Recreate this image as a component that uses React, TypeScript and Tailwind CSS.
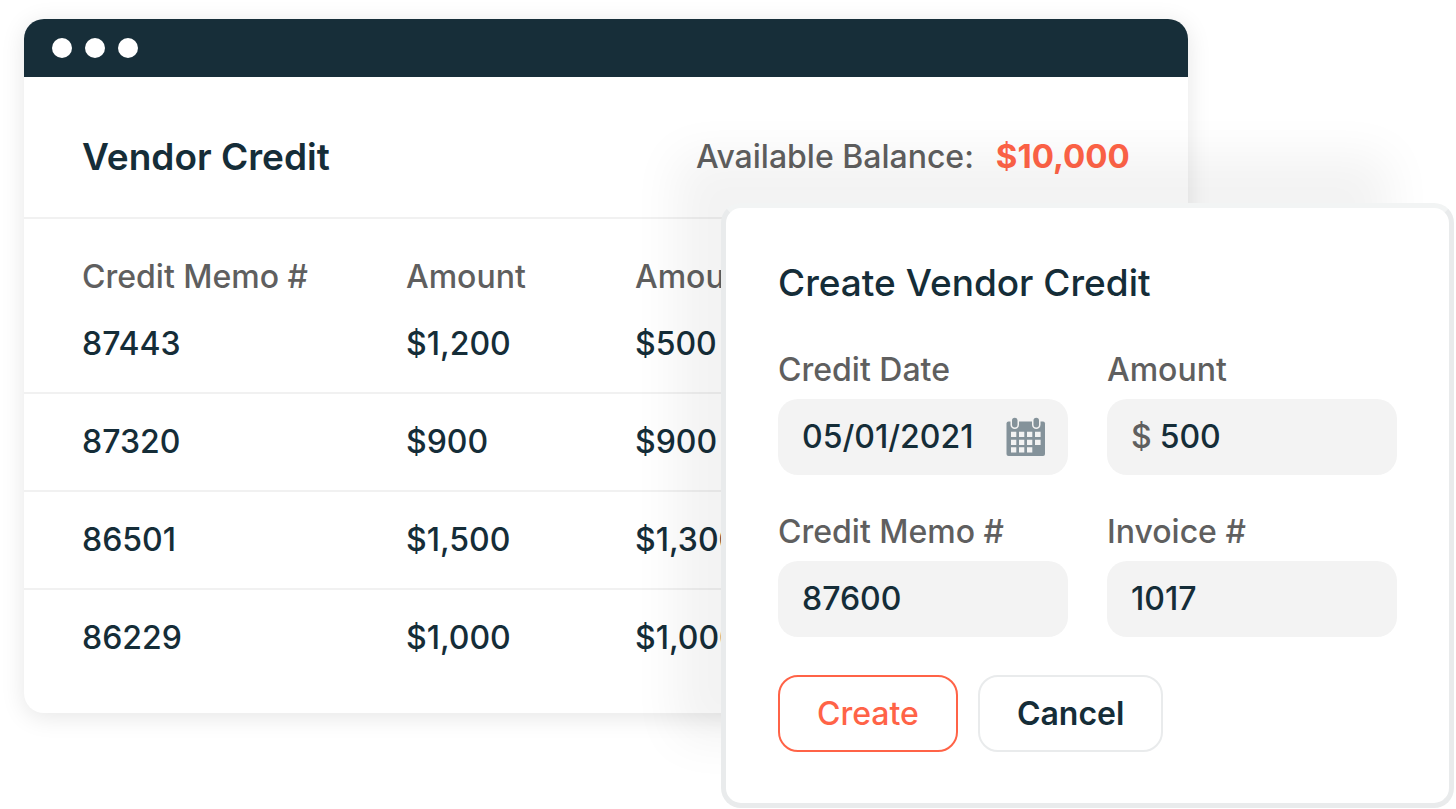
import type { ReactNode } from "react"

const credits = [
  { memo: "87443", amount: "$1,200", left: "$500" },
  { memo: "87320", amount: "$900", left: "$900" },
  { memo: "86501", amount: "$1,500", left: "$1,300" },
  { memo: "86229", amount: "$1,000", left: "$1,000" },
]

const CalendarIcon = () => (
  <svg viewBox="0 0 40 40" className="size-10" aria-hidden="true">
    <rect x="0.500" y="4.500" width="38.500" height="34.500" rx="2" fill="#84929a" />
    {/* rings, outlined in the field colour */}
    <rect x="4.500" y="-1" width="8.500" height="13" rx="4.250" fill="#f3f3f3" />
    <rect x="26" y="-1" width="8.500" height="13" rx="4.250" fill="#f3f3f3" />
    <rect x="6" y="0.700" width="5.500" height="9.700" rx="2.750" fill="#84929a" />
    <rect x="27.500" y="0.700" width="5.500" height="9.700" rx="2.750" fill="#84929a" />
    {/* days */}
    <path
      fill="#f3f3f3"
      d="M5 14.700h5.300v5.300H5zM13 14.700h5.300v5.300H13zM21 14.700h5.300v5.300H21zM29 14.700h5.600v5.300H29zM5 22.700h5.300v5.300H5zM13 22.700h5.300v5.300H13zM21 22.700h5.300v5.300H21zM29 22.700h5.600v5.300H29zM5 30.200h5.300v5.300H5zM13 30.200h5.300v5.300H13zM21 30.200h5.300v5.300H21z"
    />
  </svg>
)

type FieldProps = {
  id: string
  label: string
  value: string
  prefix?: string
  children?: ReactNode
}

const Field = ({ id, label, value, prefix, children }: FieldProps) => (
  <div>
    <label htmlFor={id} className="block leading-10 text-[#5f5f5f]">
      {label}
    </label>
    <div className="mt-[9px] flex h-[76px] items-center gap-2 rounded-[20px] bg-[#f3f3f3] px-6">
      {prefix && <span className="text-[#5f5f5f]">{prefix}</span>}
      <input
        id={id}
        type="text"
        defaultValue={value}
        className="w-full min-w-0 flex-1 bg-transparent text-[#152d38] outline-none"
      />
      {children}
    </div>
  </div>
)

const VendorCreditWindow = () => (
  <section className="mt-[19px] ml-6 w-[calc(80%-1px)] overflow-hidden rounded-[20px] bg-white shadow-[0_4px_24px_rgba(0,0,0,0.1)]">
    <div className="flex h-[58px] items-center gap-[13px] bg-[#172e39] px-7">
      <span className="size-5 rounded-full bg-white" />
      <span className="size-5 rounded-full bg-white" />
      <span className="size-5 rounded-full bg-white" />
    </div>

    <header className="flex h-[142px] items-center justify-between border-b-2 border-[#f1f1f1] px-[58px] pt-5">
      <h1 className="text-[37px] font-semibold text-[#152d38]">Vendor Credit</h1>
      <p className="flex items-baseline gap-[22px] text-[#5f5f5f]">
        Available Balance:
        <strong className="text-[33px] font-bold text-[#ff6347]">$10,000</strong>
      </p>
    </header>

    <table className="mb-7 w-full table-fixed text-left leading-9">
      <thead className="text-[#5f5f5f]">
        <tr>
          <th className="w-[382px] pt-10 pl-[58px] font-medium">Credit Memo #</th>
          <th className="w-[229px] pt-10 font-medium">Amount</th>
          <th className="pt-10 font-medium">Amount</th>
        </tr>
      </thead>
      <tbody className="text-[#152d38]">
        {credits.map((credit) => (
          <tr key={credit.memo} className="h-[98px] border-b-2 border-[#f1f1f1] last:h-24 last:border-b-0">
            <td className="pl-[58px]">{credit.memo}</td>
            <td>{credit.amount}</td>
            <td>{credit.left}</td>
          </tr>
        ))}
      </tbody>
    </table>
  </section>
)

const CreateCreditDialog = () => (
  <form
    role="dialog"
    aria-labelledby="dialog-title"
    className="absolute top-[203px] right-0.5 w-[calc(50%+5px)] rounded-[20px] border-[5px] border-[#e9ebec] border-t-[#f2f4f4] bg-white px-[52px] py-[51px] shadow-[-55px_-58px_48px_-9px_rgba(0,0,0,0.05)]"
  >
    <h2 id="dialog-title" className="text-[37px] leading-[48px] font-medium text-[#152d38]">
      Create Vendor Credit
    </h2>

    <div className="mt-[43px] grid grid-cols-2 gap-x-[39px] gap-y-[37px]">
      <Field id="date" label="Credit Date" value="05/01/2021">
        <button type="button" aria-label="Pick a date" className="-mr-0.5">
          <CalendarIcon />
        </button>
      </Field>
      <Field id="amount" label="Amount" value="500" prefix="$" />
      <Field id="memo" label="Credit Memo #" value="87600" />
      <Field id="invoice" label="Invoice #" value="1017" />
    </div>

    <div className="mt-[38px] flex gap-5">
      <button type="button" className="h-[77px] rounded-[20px] border-2 border-[#ff6347] px-[37px] text-[#ff6347]">
        Create
      </button>
      <button type="button" className="h-[77px] rounded-[20px] border-2 border-[#e9ebec] px-[37px] font-semibold text-[#152d38]">
        Cancel
      </button>
    </div>
  </form>
)

export default function App() {
  return (
    <main className="relative flow-root min-h-[809px] bg-white font-['Inter',sans-serif] text-[32px] font-medium">
      <VendorCreditWindow />
      <CreateCreditDialog />
    </main>
  )
}
